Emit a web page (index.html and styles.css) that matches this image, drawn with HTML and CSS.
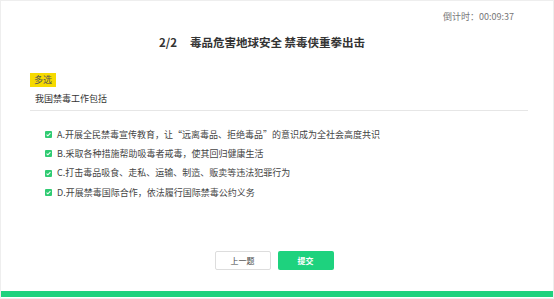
FILE: index.html
```html
<!DOCTYPE html>
<html lang="zh-CN">
  <head>
    <meta charset="UTF-8" />
    <meta name="viewport" content="width=device-width, initial-scale=1.0" />
    <title>禁毒答题</title>
    <link rel="stylesheet" href="styles.css">
  </head>
  <body>
    <div class="page">
      <!-- Header -->
      <div class="timer">倒计时：00:09:37</div>
      <h1 class="title"><span class="num">2/2</span>毒品危害地球安全 禁毒侠重拳出击</h1>

      <!-- Question -->
      <div class="question">
        <span class="tag">多选</span>
        <p class="stem">我国禁毒工作包括</p>

        <ul class="options">
          <li class="option">
            <span class="check"><svg viewBox="0 0 8 8" width="8" height="8"><path d="M1.8 4.1 3.3 5.5 6.2 2.5" fill="none" stroke="#fff" stroke-width="1.2"/></svg></span>
            A.开展全民禁毒宣传教育，让“远离毒品、拒绝毒品”的意识成为全社会高度共识
          </li>
          <li class="option">
            <span class="check"><svg viewBox="0 0 8 8" width="8" height="8"><path d="M1.8 4.1 3.3 5.5 6.2 2.5" fill="none" stroke="#fff" stroke-width="1.2"/></svg></span>
            B.采取各种措施帮助吸毒者戒毒，使其回归健康生活
          </li>
          <li class="option">
            <span class="check"><svg viewBox="0 0 8 8" width="8" height="8"><path d="M1.8 4.1 3.3 5.5 6.2 2.5" fill="none" stroke="#fff" stroke-width="1.2"/></svg></span>
            C.打击毒品吸食、走私、运输、制造、贩卖等违法犯罪行为
          </li>
          <li class="option">
            <span class="check"><svg viewBox="0 0 8 8" width="8" height="8"><path d="M1.8 4.1 3.3 5.5 6.2 2.5" fill="none" stroke="#fff" stroke-width="1.2"/></svg></span>
            D.开展禁毒国际合作，依法履行国际禁毒公约义务
          </li>
        </ul>
      </div>

      <!-- Actions -->
      <div class="actions">
        <button class="btn btn-prev">上一题</button>
        <button class="btn btn-submit">提交</button>
      </div>

      <div class="bottom-bar"></div>
    </div>
  </body>
</html>
```

FILE: styles.css
```css
* {
  margin: 0;
  padding: 0;
  box-sizing: border-box;
}

body {
  font-family: "Noto Sans CJK SC", "Noto Sans", sans-serif;
  color: #333;
  background: #fff;
}

.page {
  width: 554px;
  height: 299px;
  border: 1px solid #eee;
  display: flex;
  flex-direction: column;
}

/* Header */
.timer {
  align-self: flex-end;
  margin: 10px 39px 0 0;
  font-size: 9px;
  line-height: 12px;
  color: #777;
}

.title {
  margin-top: 11px;
  text-align: center;
  font-size: 11.5px;
  line-height: 16px;
  font-weight: 600;
  color: #333;
  padding-right: 30px;
}

.title .num {
  margin-right: 13px;
}

/* Question */
.question {
  margin: 14px 25px 0 29px;
}

.tag {
  display: inline-block;
  background: #f6da00;
  color: #555;
  font-size: 9px;
  line-height: 14px;
  padding: 0 4px;
}

.stem {
  font-size: 9px;
  line-height: 12px;
  padding: 5px 0 5px 5px;
  border-bottom: 1px solid #e6e6e6;
}

.options {
  list-style: none;
  margin: 14px 0 0 15px;
}

.option {
  display: flex;
  align-items: center;
  gap: 5px;
  font-size: 9px;
  line-height: 12px;
  height: 19.3px;
  color: #444;
}

.check {
  width: 7px;
  height: 7px;
  border-radius: 1px;
  background: #2fcb72;
  display: flex;
  align-items: center;
  justify-content: center;
  flex-shrink: 0;
}

.check svg {
  width: 7px;
  height: 7px;
}

/* Actions */
.actions {
  margin-top: auto;
  display: flex;
  justify-content: center;
  gap: 7px;
  padding-right: 6px;
}

.btn {
  width: 56px;
  height: 19px;
  font-family: inherit;
  font-size: 8px;
  border-radius: 2px;
  cursor: pointer;
}

.btn-prev {
  background: #fff;
  border: 1px solid #ddd;
  color: #444;
}

.btn-submit {
  background: #1ed27e;
  border: none;
  color: #fff;
  font-weight: 600;
}

.bottom-bar {
  margin-top: 21px;
  margin-bottom: 1px;
  height: 6px;
  background: #1ed27e;
}
```
